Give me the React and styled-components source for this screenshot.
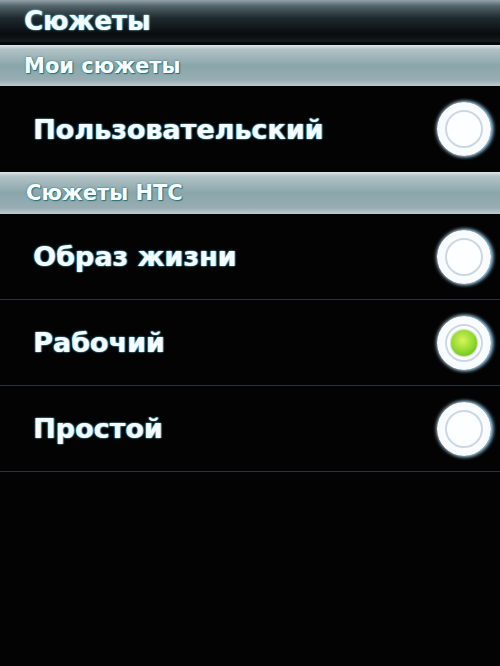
import React from "react";
import styled, { createGlobalStyle } from "styled-components";

const GlobalStyle = createGlobalStyle`
  html, body {
    margin: 0;
    padding: 0;
    background: #020203;
  }
  body {
    font-family: "DejaVu Sans", Verdana, sans-serif;
  }
`;

const Screen = styled.div`
  width: 500px;
  height: 666px;
  background: #030304;
  overflow: hidden;
  display: flex;
  flex-direction: column;
`;

const TitleBar = styled.div`
  height: 42px;
  display: flex;
  align-items: center;
  padding: 0 24px;
  background: linear-gradient(
    to bottom,
    #93a3a8 0px,
    #52646a 6px,
    #1f2a2e 18px,
    #090c0e 34px,
    #151c1f 42px
  );
  border-bottom: 3px solid #05080a;
  color: #f4fbff;
  font-size: 26px;
  font-weight: bold;
  text-shadow: 0 0 2px #7fe0ea, 1px 0 1px #3fb0c0;
`;

const SectionHeader = styled.div`
  height: ${(p) => p.h}px;
  display: flex;
  align-items: center;
  padding: 0 ${(p) => p.pad}px;
  background: linear-gradient(
    to bottom,
    #e0e7ea 0px,
    #b2c3c7 4px,
    #8aa6ab 50%,
    #97adb2 85%,
    #bccacd 100%
  );
  color: #fbffff;
  font-size: 21px;
  font-weight: bold;
  text-shadow: 0 0 2px #1f7e8a, 1px 1px 1px #2a6f78;
`;

const Row = styled.div`
  height: 86px;
  display: flex;
  align-items: center;
  justify-content: space-between;
  padding: 0 8px 0 33px;
  border-bottom: ${(p) => (p.divided ? "1px solid #2a3236" : "none")};
  box-sizing: border-box;
`;

const Label = styled.span`
  color: #f6fcff;
  font-size: 27px;
  font-weight: bold;
  text-shadow: 0 0 2px #6fd8e6, 1px 0 1px #39a9ba;
`;

const Radio = styled.div`
  width: 54px;
  height: 54px;
  border-radius: 50%;
  background: radial-gradient(circle, #ffffff 0%, #f8fbfd 65%, #eef3f8 100%);
  box-shadow: 0 0 4px #dcefff, 2px 0 4px #6bbde8;
  display: flex;
  align-items: center;
  justify-content: center;
  margin-right: 1px;
`;

const RadioInner = styled.div`
  width: 38px;
  height: 38px;
  border-radius: 50%;
  border: 2px solid #cbd8e3;
  box-sizing: border-box;
  display: flex;
  align-items: center;
  justify-content: center;
  background: #fdfeff;
`;

const Dot = styled.div`
  width: 26px;
  height: 26px;
  border-radius: 50%;
  background: radial-gradient(circle at 45% 40%, #d8f55a 0%, #8ed82c 55%, #5aa818 100%);
  box-shadow: 0 0 2px #4f8f20;
`;

const RadioButton = ({ checked }) => (
  <Radio>
    <RadioInner>{checked && <Dot />}</RadioInner>
  </Radio>
);

const themes = [
  { name: "Образ жизни", checked: false },
  { name: "Рабочий", checked: true },
  { name: "Простой", checked: false },
];

export default function App() {
  return (
    <>
      <GlobalStyle />
      <Screen>
        <TitleBar>Сюжеты</TitleBar>
        <SectionHeader h={41} pad={24}>Мои сюжеты</SectionHeader>
        <Row>
          <Label>Пользовательский</Label>
          <RadioButton />
        </Row>
        <SectionHeader h={42} pad={26}>Сюжеты HTC</SectionHeader>
        {themes.map((t) => (
          <Row key={t.name} divided>
            <Label>{t.name}</Label>
            <RadioButton checked={t.checked} />
          </Row>
        ))}
      </Screen>
    </>
  );
}
